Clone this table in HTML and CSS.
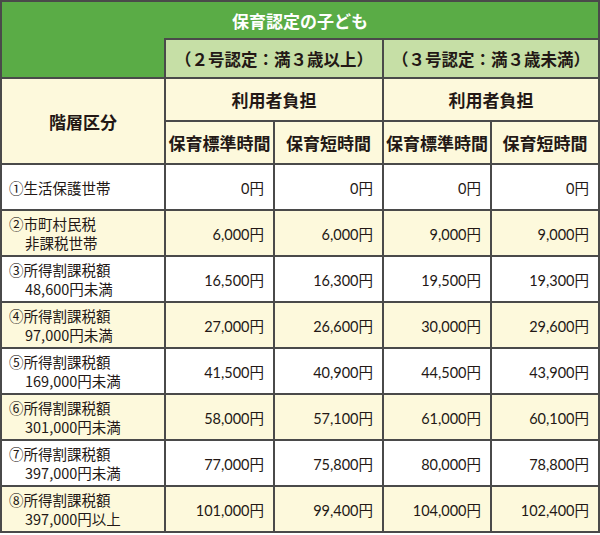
FILE: index.html
```html
<!DOCTYPE html>
<html lang="ja">
<head>
<meta charset="utf-8">
<title>保育認定の子ども 利用者負担</title>
<link rel="stylesheet" href="styles.css">
</head>
<body>
<table class="fee">
  <colgroup>
    <col class="c-cat">
    <col class="c-val">
    <col class="c-val">
    <col class="c-val2">
    <col class="c-val2">
  </colgroup>
  <thead>
    <tr class="r1">
      <th class="green title" colspan="5">保育認定の子ども</th>
    </tr>
    <tr class="r2">
      <th class="green blank"></th>
      <th class="lgreen" colspan="2">（２号認定：満３歳以上）</th>
      <th class="lgreen" colspan="2">（３号認定：満３歳未満）</th>
    </tr>
    <tr class="r3">
      <th class="cream" rowspan="2">階層区分</th>
      <th class="cream" colspan="2">利用者負担</th>
      <th class="cream" colspan="2">利用者負担</th>
    </tr>
    <tr class="r4">
      <th class="cream">保育標準時間</th>
      <th class="cream">保育短時間</th>
      <th class="cream">保育標準時間</th>
      <th class="cream">保育短時間</th>
    </tr>
  </thead>
  <tbody>
    <tr class="row">
      <td class="cat">①生活保護世帯</td>
      <td class="num">0円</td><td class="num">0円</td><td class="num">0円</td><td class="num">0円</td>
    </tr>
    <tr class="row alt">
      <td class="cat">②市町村民税<br><span class="ind">非課税世帯</span></td>
      <td class="num">6,000円</td><td class="num">6,000円</td><td class="num">9,000円</td><td class="num">9,000円</td>
    </tr>
    <tr class="row">
      <td class="cat">③所得割課税額<br><span class="ind">48,600円未満</span></td>
      <td class="num">16,500円</td><td class="num">16,300円</td><td class="num">19,500円</td><td class="num">19,300円</td>
    </tr>
    <tr class="row alt">
      <td class="cat">④所得割課税額<br><span class="ind">97,000円未満</span></td>
      <td class="num">27,000円</td><td class="num">26,600円</td><td class="num">30,000円</td><td class="num">29,600円</td>
    </tr>
    <tr class="row">
      <td class="cat">⑤所得割課税額<br><span class="ind">169,000円未満</span></td>
      <td class="num">41,500円</td><td class="num">40,900円</td><td class="num">44,500円</td><td class="num">43,900円</td>
    </tr>
    <tr class="row alt">
      <td class="cat">⑥所得割課税額<br><span class="ind">301,000円未満</span></td>
      <td class="num">58,000円</td><td class="num">57,100円</td><td class="num">61,000円</td><td class="num">60,100円</td>
    </tr>
    <tr class="row">
      <td class="cat">⑦所得割課税額<br><span class="ind">397,000円未満</span></td>
      <td class="num">77,000円</td><td class="num">75,800円</td><td class="num">80,000円</td><td class="num">78,800円</td>
    </tr>
    <tr class="row alt">
      <td class="cat">⑧所得割課税額<br><span class="ind">397,000円以上</span></td>
      <td class="num">101,000円</td><td class="num">99,400円</td><td class="num">104,000円</td><td class="num">102,400円</td>
    </tr>
  </tbody>
</table>
</body>
</html>
```

FILE: styles.css
```css
html, body {
  margin: 0;
  padding: 0;
  background: #ffffff;
}

.fee {
  border-collapse: collapse;
  table-layout: fixed;
  width: 600px;
  color: #231815;
  font-family: "Lato", "Noto Sans CJK JP", sans-serif;
}

.c-cat { width: 164px; }
.c-val { width: 109px; }
.c-val2 { width: 108px; }

.fee th,
.fee td {
  border: 2px solid #4a4a4a;
  padding: 0;
}

.fee th {
  font-family: "Noto Sans CJK JP", sans-serif;
  font-weight: 700;
  font-size: 17px;
  text-align: center;
  vertical-align: middle;
  letter-spacing: 0;
}

.green {
  background: #5aac46;
  color: #ffffff;
}

.fee .title {
  border-bottom: none;
}

.fee .blank {
  border-top: none;
}

.fee .lgreen {
  background: #c6dfa6;
  border-top: 2px solid #4a4a4a;
  font-size: 16.5px;
}

.cream {
  background: #fdf9dc;
}

.r1 th { height: 36px; }
.r2 th { height: 37px; }
.r3 th { height: 41px; }
.r4 th { height: 41px; }

.row td { height: 44px; background: #ffffff; }
.row.alt td { background: #fdf9dc; }

.fee .cat {
  font-family: "Noto Sans CJK JP", sans-serif;
  font-size: 14.5px;
  line-height: 19px;
  padding-left: 7px;
  text-align: left;
  vertical-align: middle;
}

.ind {
  padding-left: 16px;
}

.fee .num {
  font-size: 14.5px;
  text-align: right;
  padding-right: 9px;
  vertical-align: middle;
}
```
